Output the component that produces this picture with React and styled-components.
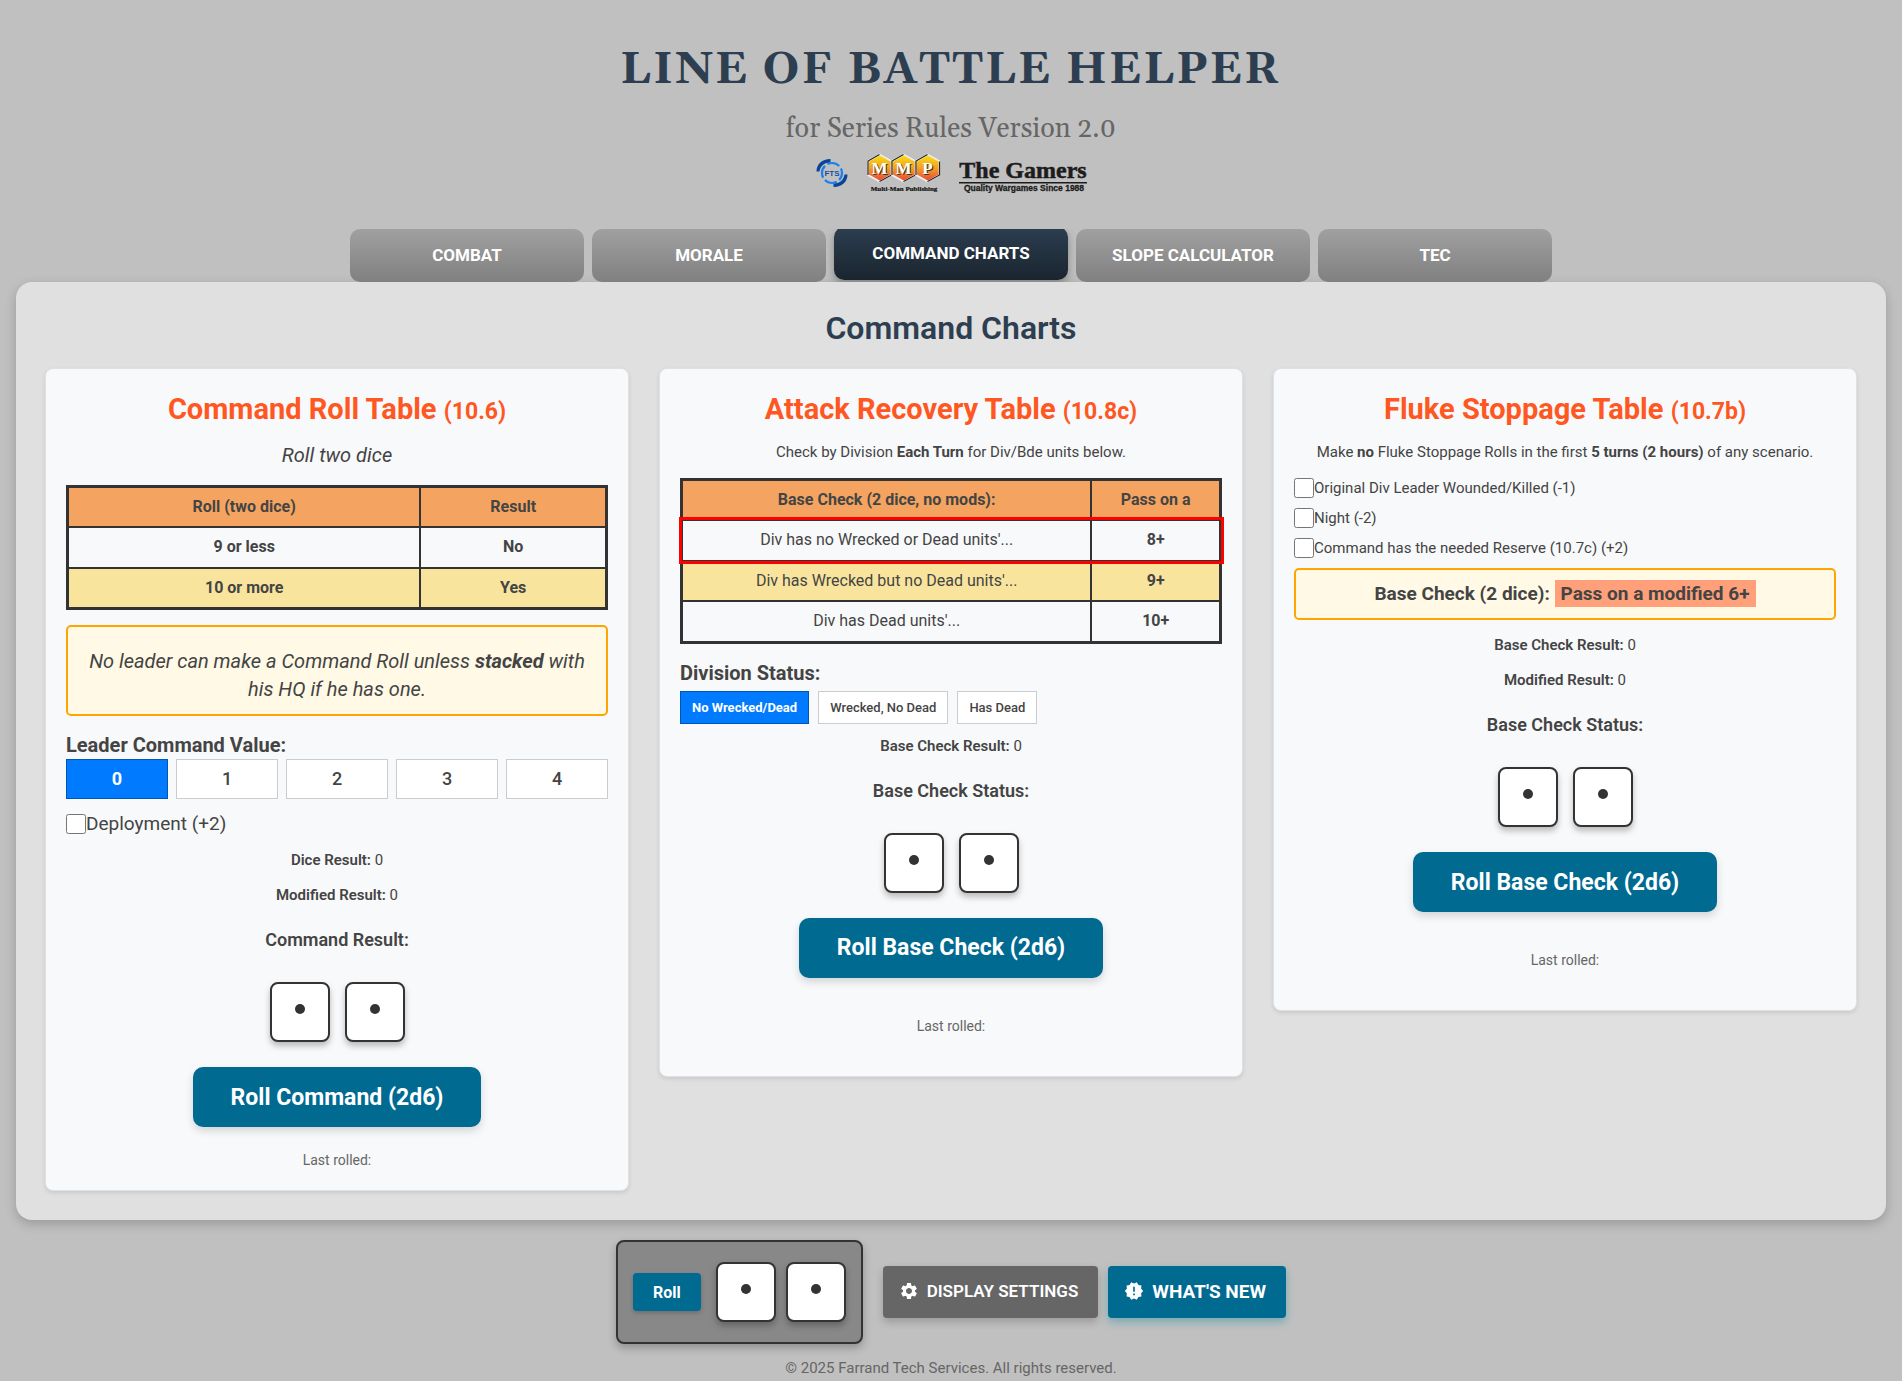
import React, { useState } from 'react';
import styled, { createGlobalStyle, css } from 'styled-components';
import { MdSettings, MdNewReleases } from 'react-icons/md';

const GlobalStyle = createGlobalStyle`
  * {
    box-sizing: border-box;
  }

  body {
    margin: 0;
    background: #c0c0c0;
    color: #444;
    font-family: Roboto, "Liberation Sans", sans-serif;
    font-size: 16px;
  }

  button, input {
    font-family: inherit;
  }
`;

const Page = styled.div`
  padding: 40px 16px 0;
`;

const Header = styled.header`
  display: flex;
  flex-direction: column;
  align-items: center;
  font-family: Georgia, Gelasio, "Liberation Serif", serif;
  text-align: center;
`;

const SiteTitle = styled.h1`
  margin: 0;
  color: #2c3e50;
  font-size: 45px;
  font-weight: 700;
  line-height: 60px;
  letter-spacing: 2px;
  text-transform: uppercase;
`;

const Subtitle = styled.p`
  margin: 9px 0 4px;
  color: #666;
  font-size: 27px;
  line-height: 40px;
`;

const Logos = styled.div`
  display: flex;
  align-items: center;
  gap: 18px;
  height: 40px;
`;

const Tabs = styled.nav`
  display: flex;
  gap: 8px;
  max-width: 1202px;
  margin: 36px auto 0;
  overflow: hidden;
`;

const Tab = styled.button`
  flex: 1;
  height: 53px;
  padding: 0 16px 2px;
  border: 0;
  border-radius: 10px;
  background: linear-gradient(#a0a0a0, #808080);
  color: #fff;
  font-size: 17px;
  font-weight: 700;
  text-transform: uppercase;
  cursor: pointer;

  ${({ $active }) => $active && css`
    background: linear-gradient(#2c3e50, #1a252f);
    box-shadow: 0 4px 8px rgba(0, 0, 0, 0.3);
    transform: translateY(-2px);
  `}
`;

const Panel = styled.main`
  padding: 26px 29px 29px;
  border-radius: 16px;
  background: #e0e0e0;
  box-shadow: 0 4px 12px rgba(0, 0, 0, 0.2);
`;

const PanelTitle = styled.h2`
  margin: 0 0 20px;
  color: #2c3e50;
  font-size: 32px;
  font-weight: 600;
  line-height: 40px;
  text-align: center;
`;

const Cards = styled.div`
  display: grid;
  grid-template-columns: repeat(3, minmax(0, 1fr));
  align-items: start;
  gap: 30px;
`;

const Card = styled.section`
  padding: 20px;
  border: 1px solid #dee2e6;
  border-radius: 8px;
  background: #f8f9fa;
  box-shadow: 0 2px 4px rgba(0, 0, 0, 0.1);
`;

const CardTitle = styled.h3`
  margin: 0 0 11px;
  color: #ff5722;
  font-size: 29px;
  font-weight: 700;
  line-height: 40px;
  text-align: center;

  small {
    font-size: 23px;
    line-height: 1;
  }
`;

const Lead = styled.p`
  margin: 0 0 15px;
  font-size: 20px;
  font-style: italic;
  line-height: 30px;
  text-align: center;
`;

const Intro = styled.p`
  margin: 0 0 14px;
  font-size: 15px;
  line-height: 24px;
  text-align: center;
`;

const ChartTable = styled.table`
  width: 100%;
  border: 3px solid #333;
  border-collapse: collapse;
  line-height: 1.4;
  text-align: center;

  th, td {
    padding: 8px;
    border: 2px solid #333;
  }

  th {
    background: #f4a460;
    font-weight: 700;
  }
`;

const ChartRow = styled.tr`
  background: ${({ $shaded }) => ($shaded ? '#f9e49d' : 'transparent')};
  font-weight: ${({ $strong }) => ($strong ? 700 : 400)};
  outline: ${({ $current }) => ($current ? '3px solid #f00' : 'none')};

  td:last-child {
    font-weight: 700;
  }
`;

const Notice = styled.p`
  margin: ${({ $compact }) => ($compact ? '4px 0 13px' : '15px 0')};
  padding: ${({ $compact }) => ($compact ? '10px 20px' : '20px 20px 11px')};
  border: 2px solid #ffa500;
  border-radius: 5px;
  background: #fff9e6;
  font-size: ${({ $compact }) => ($compact ? 19 : 20)}px;
  font-style: ${({ $compact }) => ($compact ? 'normal' : 'italic')};
  font-weight: ${({ $compact }) => ($compact ? 700 : 400)};
  line-height: 28px;
  text-align: center;
`;

const Highlight = styled.span`
  padding: 2px 6px;
  background: #ffa07a;
`;

const GroupLabel = styled.div`
  margin-top: 15px;
  font-size: 20px;
  font-weight: 700;
  line-height: 28px;
`;

const Options = styled.div`
  display: flex;
  gap: 8px;
  margin-bottom: 11px;
`;

const Option = styled.button`
  flex: 1;
  height: 40px;
  padding: 0 0 2px;
  border: 1px solid ${({ $active }) => ($active ? '#0056b3' : '#ccc')};
  background: ${({ $active }) => ($active ? '#007bff' : '#fff')};
  color: ${({ $active }) => ($active ? '#fff' : '#444')};
  font-size: 18px;
  font-weight: ${({ $active }) => ($active ? 700 : 500)};
  cursor: pointer;
`;

const SmallOptions = styled(Options)`
  gap: 9px;
  margin: 4px 0 10px;
`;

const SmallOption = styled(Option)`
  flex: none;
  height: 33px;
  padding: 0 11px;
  font-size: 13px;
`;

const CheckLabel = styled.label`
  display: flex;
  align-items: center;
  margin-bottom: 10px;
  font-size: ${({ $large }) => ($large ? 19 : 15)}px;
  line-height: ${({ $large }) => ($large ? 28 : 20)}px;

  input {
    width: 20px;
    height: 20px;
    margin: 0;
  }
`;

const Stat = styled.p`
  margin: 0 0 11px;
  font-size: 15px;
  line-height: 24px;
  text-align: center;

  b {
    font-weight: 600;
  }
`;

const Status = styled.p`
  margin: 21px 0 30px;
  font-size: 18px;
  font-weight: 600;
  line-height: 24px;
  text-align: center;
`;

const DicePair = styled.div`
  display: flex;
  justify-content: center;
  gap: ${({ $gap }) => $gap}px;
`;

const Die = styled.div`
  display: flex;
  align-items: center;
  justify-content: center;
  width: 60px;
  height: 60px;
  padding-bottom: 6px;
  border: 2px solid #333;
  border-radius: 8px;
  background: #fff;
  box-shadow: 0 4px 6px rgba(0, 0, 0, 0.25);

  &::before {
    content: "";
    width: 10px;
    height: 10px;
    border-radius: 50%;
    background: #333;
  }
`;

const RollButton = styled.button`
  display: block;
  height: 60px;
  margin: 25px auto 0;
  padding: 0 38px;
  border: 0;
  border-radius: 10px;
  background: #006a91;
  box-shadow: 0 4px 8px rgba(0, 0, 0, 0.15);
  color: #fff;
  font-size: 23px;
  font-weight: 700;
  cursor: pointer;
`;

const LastRolled = styled.p`
  margin: ${({ $spaced }) => ($spaced ? '38px 0 20px' : '23px 0 0')};
  color: #666;
  font-size: 14px;
  line-height: 20px;
  text-align: center;
`;

const Toolbar = styled.div`
  display: flex;
  align-items: center;
  justify-content: center;
  gap: 10px;
  margin-top: 20px;
`;

const QuickRoll = styled.div`
  display: flex;
  align-items: center;
  gap: 15px;
  height: 104px;
  margin-right: 10px;
  padding: 0 15px;
  border: 2px solid #333;
  border-radius: 8px;
  background: #888;
  box-shadow: 0 4px 8px rgba(0, 0, 0, 0.25);
`;

const QuickRollButton = styled.button`
  height: 38px;
  padding: 0 20px;
  border: 0;
  border-radius: 4px;
  background: #006a91;
  box-shadow: 0 2px 4px rgba(0, 0, 0, 0.2);
  color: #fff;
  font-size: 16px;
  font-weight: 700;
  cursor: pointer;
`;

const ToolButton = styled.button`
  display: flex;
  align-items: center;
  gap: 8px;
  height: 52px;
  padding: 0 20px 2px 16px;
  border: 0;
  border-radius: 4px;
  background: ${({ $accent }) => ($accent ? '#006a91' : '#666')};
  box-shadow: 0 4px 8px ${({ $accent }) => ($accent ? 'rgba(0, 140, 160, 0.4)' : 'rgba(0, 0, 0, 0.2)')};
  color: #fff;
  font-size: ${({ $accent }) => ($accent ? 19 : 17)}px;
  font-weight: ${({ $accent }) => ($accent ? 700 : 600)};
  text-transform: uppercase;
  cursor: pointer;

  svg {
    width: 20px;
    height: 20px;
  }
`;

const Copyright = styled.footer`
  margin-top: 12px;
  color: #666;
  font-size: 15px;
  line-height: 24px;
  text-align: center;
`;

function FtsLogo() {
  return (
    <svg width="34" height="30" viewBox="0 0 34 30" role="img" aria-label="FTS">
      <path d="M1.500 13.500C1.500 6 7.500 .8 15.500 1v3.500C9.500 4.500 5.500 7.500 4.500 13.500z" fill="#0b4396" />
      <path d="M32.500 16.500c0 7.500-6 12.700-14 12.500v-3.500c6 0 10-3 11-9z" fill="#0b4396" />
      <circle cx="17" cy="15" r="10" fill="none" stroke="#1a7ff0" strokeWidth="2.200" strokeDasharray="12.700 3" strokeDashoffset="5" />
      <text x="17" y="18" textAnchor="middle" fontFamily="Liberation Sans, sans-serif" fontWeight="700" fontSize="8" fill="#174f9b">FTS</text>
    </svg>
  );
}

function MmpLogo() {
  return (
    <svg width="74" height="40" viewBox="0 0 74 40" role="img" aria-label="Multi-Man Publishing">
      <defs>
        <linearGradient id="hex" x1="0" y1="0" x2="0" y2="1">
          <stop offset="0" stopColor="#f9dc14" />
          <stop offset="0.5" stopColor="#f5a022" />
          <stop offset="1" stopColor="#ea4a35" />
        </linearGradient>
      </defs>
      {['M', 'M', 'P'].map((letter, i) => (
        <g key={i} transform={`translate(${i * 24} 0)`}>
          <path d="M12.500 .5L25 7.500v15L12.500 29.500 0 22.500v-15z" fill="#eee" />
          <path d="M12.500 1.500L1 8v14M12.500 28.500L24.500 22V8.500" fill="none" stroke="#222" strokeWidth="1.200" />
          <path d="M12.800 2.500L23.500 8.500v13l-10.700 6L2 21.500v-13z" fill="url(#hex)" />
          <text x="13.500" y="21.500" textAnchor="middle" fontFamily="Liberation Serif, serif" fontWeight="700" fontSize="17" fill="#333">{letter}</text>
          <text x="12.500" y="20.500" textAnchor="middle" fontFamily="Liberation Serif, serif" fontWeight="700" fontSize="17" fill="#fff">{letter}</text>
        </g>
      ))}
      <text x="37" y="38" textAnchor="middle" fontFamily="Liberation Serif, serif" fontWeight="700" fontSize="7" fill="#111" stroke="#111" strokeWidth="0.200">Multi-Man Publishing</text>
    </svg>
  );
}

function GamersLogo() {
  return (
    <svg width="128" height="40" viewBox="0 0 128 40" role="img" aria-label="The Gamers">
      <g fill="#1c1c1c">
        <text x="64" y="25" textAnchor="middle" fontFamily="Liberation Serif, serif" fontWeight="700" fontSize="24" stroke="#1c1c1c" strokeWidth="0.500">The Gamers</text>
        <path d="M0 29h128v1.500H0z" />
        <text x="65" y="38" textAnchor="middle" fontFamily="Liberation Sans, sans-serif" fontWeight="700" fontSize="8.500" stroke="#1c1c1c" strokeWidth="0.300">Quality Wargames Since 1988</text>
      </g>
    </svg>
  );
}

const TABS = ['Combat', 'Morale', 'Command Charts', 'Slope Calculator', 'TEC'];

const DIVISION_STATUSES = ['No Wrecked/Dead', 'Wrecked, No Dead', 'Has Dead'];

function Dice({ gap = 15 }) {
  return (
    <DicePair $gap={gap}>
      <Die role="img" aria-label="1" />
      <Die role="img" aria-label="1" />
    </DicePair>
  );
}

function CommandRollCard() {
  const [leader, setLeader] = useState(0);

  return (
    <Card>
      <CardTitle>Command Roll Table <small>(10.6)</small></CardTitle>
      <Lead>Roll two dice</Lead>
      <ChartTable>
        <thead>
          <tr>
            <th>Roll (two dice)</th>
            <th>Result</th>
          </tr>
        </thead>
        <tbody>
          <ChartRow $strong>
            <td>9 or less</td>
            <td>No</td>
          </ChartRow>
          <ChartRow $strong $shaded>
            <td>10 or more</td>
            <td>Yes</td>
          </ChartRow>
        </tbody>
      </ChartTable>
      <Notice>
        No leader can make a Command Roll unless <strong>stacked</strong> with his HQ if he has one.
      </Notice>
      <GroupLabel id="leader-value">Leader Command Value:</GroupLabel>
      <Options role="group" aria-labelledby="leader-value">
        {[0, 1, 2, 3, 4].map((value) => (
          <Option key={value} type="button" $active={value === leader} onClick={() => setLeader(value)}>
            {value}
          </Option>
        ))}
      </Options>
      <CheckLabel $large>
        <input type="checkbox" />
        Deployment (+2)
      </CheckLabel>
      <Stat><b>Dice Result:</b> 0</Stat>
      <Stat><b>Modified Result:</b> 0</Stat>
      <Status>Command Result:</Status>
      <Dice />
      <RollButton type="button">Roll Command (2d6)</RollButton>
      <LastRolled>Last rolled:</LastRolled>
    </Card>
  );
}

function AttackRecoveryCard() {
  const [status, setStatus] = useState(0);
  const rows = [
    ["Div has no Wrecked or Dead units'...", '8+'],
    ["Div has Wrecked but no Dead units'...", '9+'],
    ["Div has Dead units'...", '10+'],
  ];

  return (
    <Card>
      <CardTitle>Attack Recovery Table <small>(10.8c)</small></CardTitle>
      <Intro>Check by Division <b>Each Turn</b> for Div/Bde units below.</Intro>
      <ChartTable>
        <thead>
          <tr>
            <th>Base Check (2 dice, no mods):</th>
            <th>Pass on a</th>
          </tr>
        </thead>
        <tbody>
          {rows.map(([text, pass], i) => (
            <ChartRow key={pass} $shaded={i === 1} $current={i === status}>
              <td>{text}</td>
              <td>{pass}</td>
            </ChartRow>
          ))}
        </tbody>
      </ChartTable>
      <GroupLabel id="division-status">Division Status:</GroupLabel>
      <SmallOptions role="group" aria-labelledby="division-status">
        {DIVISION_STATUSES.map((label, i) => (
          <SmallOption key={label} type="button" $active={i === status} onClick={() => setStatus(i)}>
            {label}
          </SmallOption>
        ))}
      </SmallOptions>
      <Stat><b>Base Check Result:</b> 0</Stat>
      <Status>Base Check Status:</Status>
      <Dice />
      <RollButton type="button">Roll Base Check (2d6)</RollButton>
      <LastRolled $spaced>Last rolled:</LastRolled>
    </Card>
  );
}

function FlukeStoppageCard() {
  return (
    <Card>
      <CardTitle>Fluke Stoppage Table <small>(10.7b)</small></CardTitle>
      <Intro>
        Make <b>no</b> Fluke Stoppage Rolls in the first <b>5 turns (2 hours)</b> of any scenario.
      </Intro>
      <CheckLabel>
        <input type="checkbox" />
        Original Div Leader Wounded/Killed (-1)
      </CheckLabel>
      <CheckLabel>
        <input type="checkbox" />
        Night (-2)
      </CheckLabel>
      <CheckLabel>
        <input type="checkbox" />
        Command has the needed Reserve (10.7c) (+2)
      </CheckLabel>
      <Notice $compact>
        Base Check (2 dice): <Highlight>Pass on a modified 6+</Highlight>
      </Notice>
      <Stat><b>Base Check Result:</b> 0</Stat>
      <Stat><b>Modified Result:</b> 0</Stat>
      <Status>Base Check Status:</Status>
      <Dice />
      <RollButton type="button">Roll Base Check (2d6)</RollButton>
      <LastRolled $spaced>Last rolled:</LastRolled>
    </Card>
  );
}

export default function App() {
  const [tab, setTab] = useState('Command Charts');

  return (
    <>
      <GlobalStyle />
      <Page>
        <Header>
          <SiteTitle>Line of Battle Helper</SiteTitle>
          <Subtitle>for Series Rules Version 2.0</Subtitle>
          <Logos>
            <FtsLogo />
            <MmpLogo />
            <GamersLogo />
          </Logos>
        </Header>
        <Tabs>
          {TABS.map((name) => (
            <Tab key={name} type="button" $active={name === tab} onClick={() => setTab(name)}>
              {name}
            </Tab>
          ))}
        </Tabs>
        <Panel>
          <PanelTitle>Command Charts</PanelTitle>
          <Cards>
            <CommandRollCard />
            <AttackRecoveryCard />
            <FlukeStoppageCard />
          </Cards>
        </Panel>
        <Toolbar>
          <QuickRoll>
            <QuickRollButton type="button">Roll</QuickRollButton>
            <Dice gap={10} />
          </QuickRoll>
          <ToolButton type="button">
            <MdSettings />
            Display Settings
          </ToolButton>
          <ToolButton type="button" $accent>
            <MdNewReleases />
            What's New
          </ToolButton>
        </Toolbar>
        <Copyright>© 2025 Farrand Tech Services. All rights reserved.</Copyright>
      </Page>
    </>
  );
}
